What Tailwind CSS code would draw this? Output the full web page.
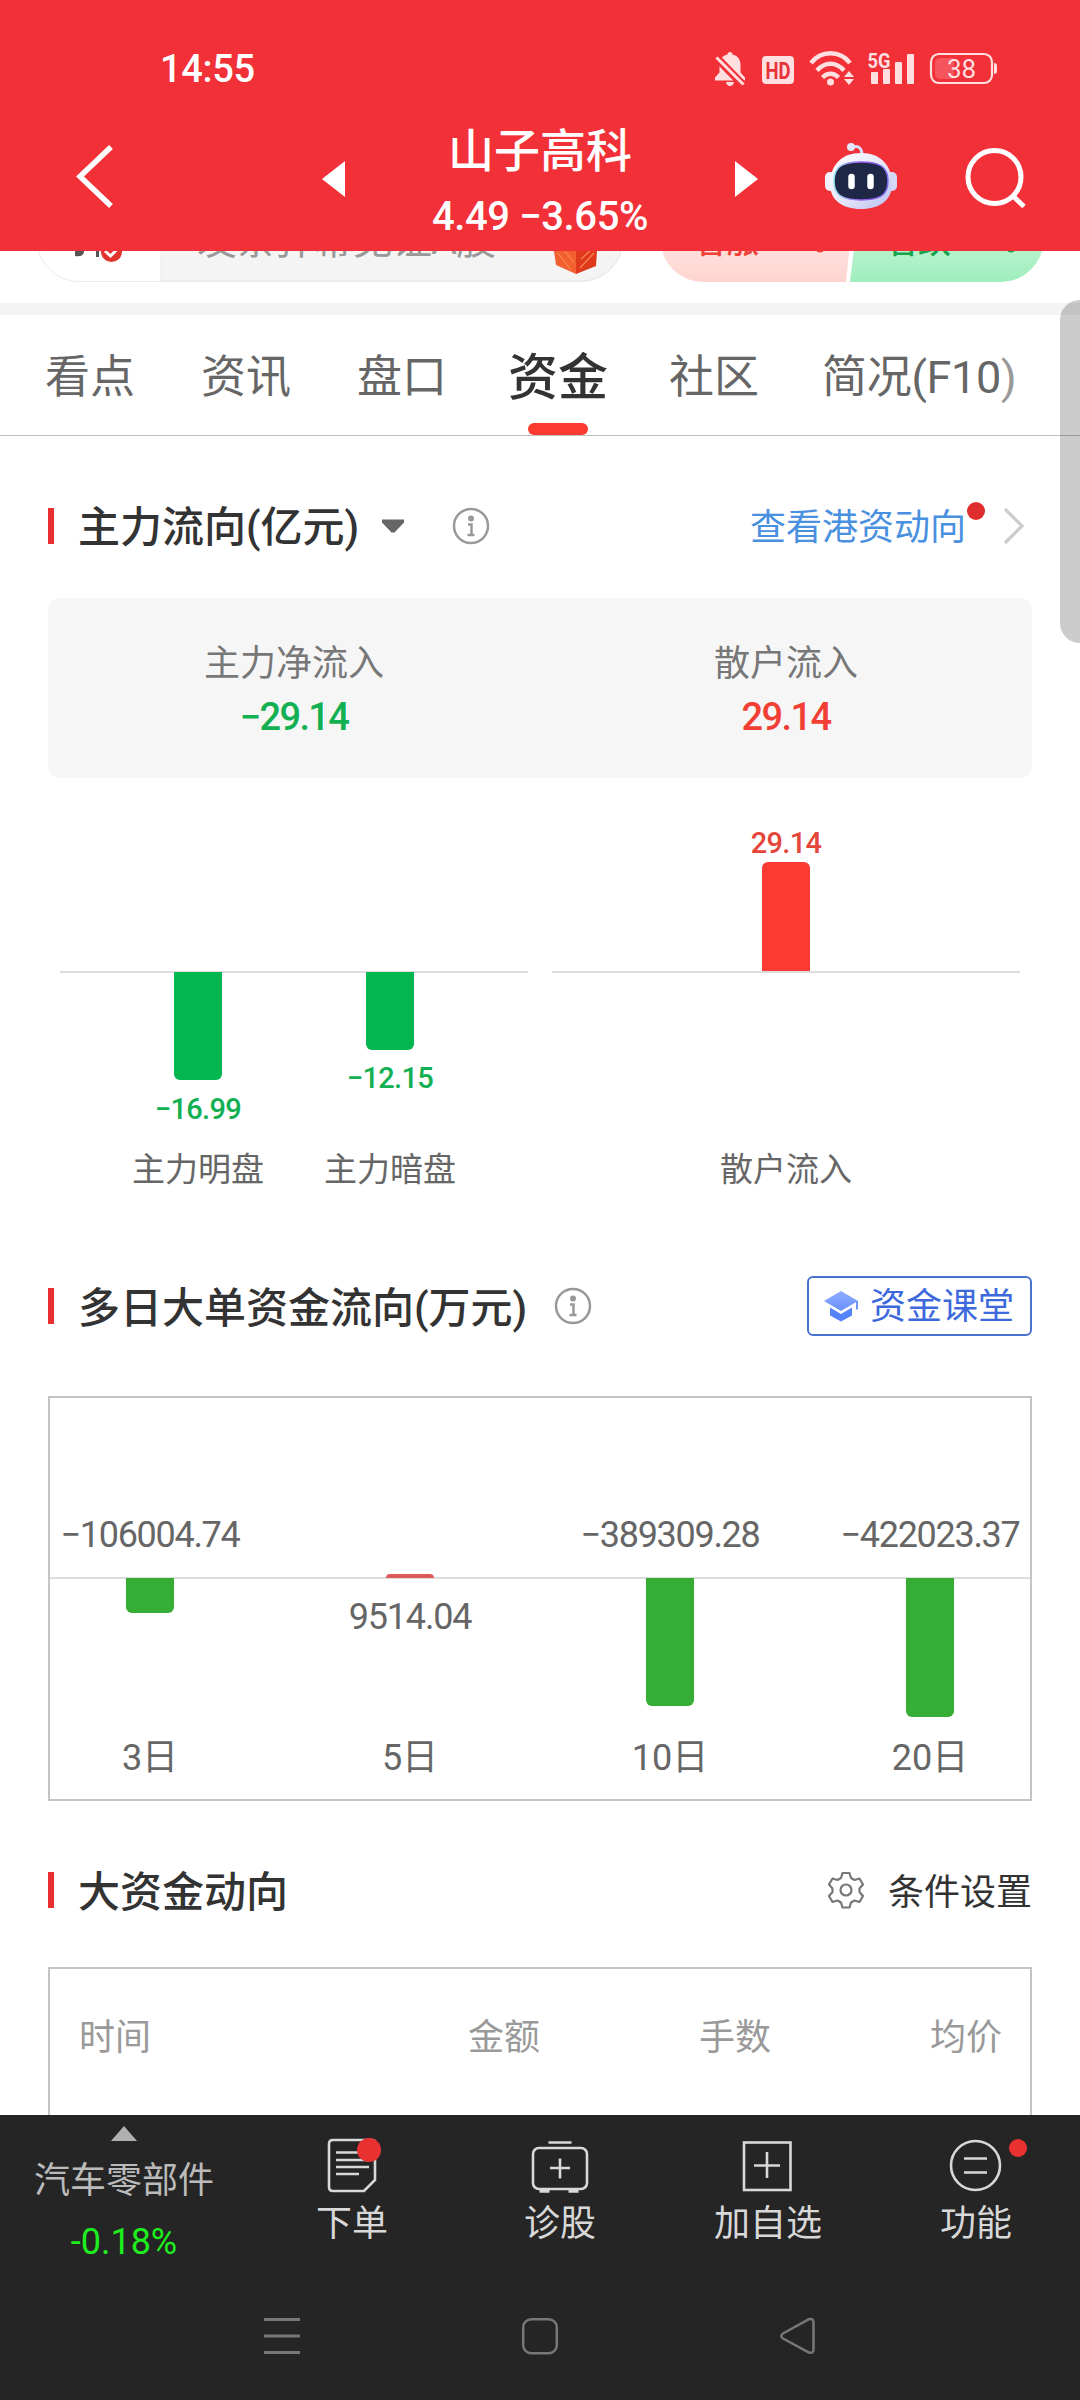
<!DOCTYPE html>
<html lang="zh-CN">
<head>
<meta charset="utf-8">
<title>山子高科 资金</title>
<script src="https://cdn.jsdelivr.net/npm/@tailwindcss/browser@4"></script>
</head>
<body class="w-[1080px] h-[2400px] overflow-hidden bg-white font-[Roboto,'Noto_Sans_CJK_SC',sans-serif] text-[#333]">
<div class="relative flex h-[2400px] flex-col overflow-hidden">

  <!-- header -->
  <header class="h-[251px] shrink-0 bg-[#f23038] text-white">
    <div class="flex h-[138px] items-center justify-between pr-[82px] pl-[160px]">
      <span class="text-[38px] leading-none font-medium tracking-[-0.300px]">14:55</span>
      <svg class="h-[40px] w-[284px]" viewBox="714 49 284 40" fill="#ffdfe0">
        <path d="M730 52c1.500 0 2.500 1 2.500 2.500 5 1 8 5 8 10v8l4.500 5v3H715v-3l4.500-5v-8c0-5 3-9 8-10 0-1.500 1-2.500 2.500-2.500zM726 82h8c-.5 2.500-2 4-4 4s-3.500-1.500-4-4z"/>
        <path d="M714 55l30 31" stroke="#f23038" stroke-width="8"/><path d="M716.500 57.500l27 27" stroke="#ffdfe0" stroke-width="3"/>
        <rect x="762" y="56" width="32" height="28" rx="4"/>
        <text x="778" y="78.500" text-anchor="middle" font-size="23" font-weight="700" fill="#e8323a" textLength="25" lengthAdjust="spacingAndGlyphs">HD</text>
        <g fill="none" stroke="#ffdfe0" stroke-width="4.500"><path d="M811 63c10-13 29-13 39 0"/><path d="M817 70.500c8-9 19-9 27 0"/><path d="M822.500 77.500c5-5 11-5 16 0"/></g>
        <circle cx="830.500" cy="82" r="3.500"/><path d="M849 71l5 6h-10zM849 85l5-6h-10z"/>
        <text x="867.500" y="67.500" font-size="21" font-weight="700" textLength="23" lengthAdjust="spacingAndGlyphs">5G</text>
        <rect x="871" y="72" width="7" height="12" rx="1"/><rect x="883" y="69" width="7" height="15" rx="1"/><rect x="895" y="62" width="7" height="22" rx="1"/><rect x="907" y="54" width="7" height="30" rx="1"/>
        <rect x="931" y="54" width="61" height="29" rx="8" fill="none" stroke="#ffdfe0" stroke-width="2.200"/>
        <path d="M940 58h14v21h-14a5 5 0 0 1-5-5v-11a5 5 0 0 1 5-5z" fill="#f5555c"/>
        <path d="M994 63c2 0 3 1 3 3v5c0 2-1 3-3 3z"/>
        <text x="961.500" y="78" text-anchor="middle" font-size="26">38</text>
      </svg>
    </div>
    <div class="relative flex h-[113px] justify-center">
      <svg class="absolute inset-0 h-[113px] w-[1080px]" viewBox="0 138 1080 113" fill="none" stroke="#fff">
        <path d="M111 147L80 176.500L111 206" stroke-width="5.500"/>
        <path d="M322 179l23-18v36zM758 179l-23-18v36z" fill="#fff" stroke="none"/>
        <circle cx="994.500" cy="177" r="26.500" stroke-width="5"/><path d="M1013 196l11 10.500" stroke-width="5"/>
        <defs>
          <linearGradient id="hd" x1="0" y1="0" x2="1" y2="1"><stop offset="0" stop-color="#fff"/><stop offset=".5" stop-color="#e8e8fa"/><stop offset="1" stop-color="#b9bff0"/></linearGradient>
          <linearGradient id="rim" x1="0" y1="0" x2="1" y2="0"><stop offset="0" stop-color="#8fe4f0"/><stop offset=".5" stop-color="#9b5cf0"/><stop offset="1" stop-color="#7a6cf0"/></linearGradient>
        </defs>
        <path d="M853 147c6-2 9 2 9 8" stroke="#dcdcf6" stroke-width="3"/><circle cx="851" cy="147" r="4" fill="#e6e8fb" stroke="none"/>
        <rect x="825" y="172" width="14" height="19" rx="5" fill="#f1f1fd" stroke="none"/><rect x="883" y="172" width="14" height="19" rx="5" fill="#d5d8f6" stroke="none"/>
        <path d="M861 153c20 0 31 13 31 31 0 16-12 25-31 25s-31-9-31-25c0-18 11-31 31-31z" fill="url(#hd)" stroke="none"/>
        <path d="M861 162c19 0 27 5 27 19s-8 19-27 19-27-5-27-19 8-19 27-19z" fill="#1f2747" stroke="url(#rim)" stroke-width="1.500"/>
        <path d="M851.500 177v9M870.500 177v9" stroke-width="6.500" stroke-linecap="round"/>
      </svg>
      <div class="flex flex-col items-center">
        <div class="mt-[-10px] text-[46px] leading-[46px] font-medium">山子高科</div>
        <div class="mt-[20px] text-[40px] leading-[46px] font-medium tracking-[-0.400px]">4.49 −3.65%</div>
      </div>
    </div>
  </header>

  <!-- comment strip, scrolled under the header -->
  <div class="relative h-[52px] shrink-0 overflow-hidden bg-white">
    <svg class="absolute inset-0 h-[52px] w-[1080px]" viewBox="0 251 1080 52">
      <defs>
        <linearGradient id="up" x1="0" y1="0" x2="0" y2="1"><stop offset=".6" stop-color="#ffe0dc"/><stop offset="1" stop-color="#fed5d0"/></linearGradient>
        <linearGradient id="dn" x1="0" y1="0" x2="0" y2="1"><stop offset=".6" stop-color="#b9f3ce"/><stop offset="1" stop-color="#9eedbc"/></linearGradient>
      </defs>
      <rect x="37" y="197" width="586" height="84.500" rx="42" fill="#fff" stroke="#ebebeb"/>
      <path d="M161 197h420a42 42 0 0 1 0 84H161z" fill="#f4f4f4" stroke="#e8e8e8"/>
      <path d="M75 251h9c0 4-3 6-9 5zM96 251h3v6h-3z" fill="#555"/>
      <circle cx="111.500" cy="251.500" r="10.500" fill="#e0342c"/><path d="M105 251l5.500 5 6-6" fill="none" stroke="#fff" stroke-width="3"/>
      <path d="M576 251h21l-1 15-20 8z" fill="#e03a1c"/><path d="M554 251h22v23l-20-9z" fill="#f2602f"/><path d="M557 252l14 18M565 251l9 12M580 268l14-15M581 259l9-8" stroke="#f98650" stroke-width="1.200"/>
      <path d="M703 197h152l-9 85H703a42 42 0 0 1 0-85z" fill="url(#up)"/>
      <path d="M860 197h141a42 42 0 0 1 0 85H850z" fill="url(#dn)"/>
      <circle cx="820" cy="248" r="4.500" fill="#ee4238"/><circle cx="1011" cy="248" r="4.500" fill="#17a44c"/>
    </svg>
    <div class="absolute left-[197px] top-[-34px] text-[40px] leading-[48px] tracking-[-1px] text-[#999]">发条弹幕见证A股</div>
    <div class="absolute left-[693px] top-[-29px] text-[33px] leading-[40px] font-medium text-[#ee4238]">看涨</div>
    <div class="absolute left-[885px] top-[-29px] text-[33px] leading-[40px] font-medium text-[#17a44c]">看跌</div>
  </div>
  <div class="h-[12px] shrink-0 bg-[#f4f4f4]"></div>

  <!-- tabs -->
  <nav class="flex h-[121px] shrink-0 items-center border-b border-[#bfbfbf] pl-[45px] text-[45px] leading-[60px] text-[#666]">
    <span class="w-[156px] pt-[6px]">看点</span><span class="w-[156px] pt-[6px]">资讯</span><span class="w-[151px] pt-[6px]">盘口</span>
    <span class="relative flex h-full w-[161px] items-center pt-[6px] text-[50px] font-medium text-[#333]">资金<i class="absolute bottom-0 left-[20px] h-[12px] w-[60px] rounded-full bg-[#fb3a30]"></i></span>
    <span class="w-[153px] pt-[6px]">社区</span><span class="pt-[6px] tracking-[-0.300px]">简况(F10<span class="text-[#999]">)</span></span>
  </nav>

  <main class="flex min-h-0 grow flex-col px-[48px]">
    <!-- main capital flow -->
    <div class="mt-[64px] flex h-[52px] shrink-0 items-center">
      <i class="h-[36px] w-[6px] bg-[#e93030]"></i>
      <h2 class="ml-[24px] pt-[3px] text-[42px] leading-[50px] font-medium">主力流向(亿元)</h2>
      <svg class="ml-[22px] h-[14px] w-[24px]" viewBox="0 0 24 14"><path d="M1 .5h22v3L13.500 13.500h-3L1 3.500z" fill="#666"/></svg>
      <svg class="ml-[47px] h-[38px] w-[38px]" viewBox="0 0 38 38" fill="none" stroke="#999" stroke-width="2.500"><circle cx="19" cy="19" r="17"/><circle cx="19" cy="11.500" r="3" fill="#999" stroke="none"/><path d="M16 17.500h3.500V28M15.500 28h7"/></svg>
      <span class="relative ml-auto pt-[3px] text-[36px] leading-[44px] text-[#4a90e0]">查看港资动向<i class="absolute right-[-19px] top-[-1px] h-[18px] w-[18px] rounded-full bg-[#e02e2e]"></i></span>
      <svg class="ml-[37px] mr-[7px] h-[38px] w-[22px]" viewBox="0 0 22 38" fill="none" stroke="#ccc" stroke-width="3.200"><path d="M2 2l17 17L2 36"/></svg>
    </div>
    <div class="mt-[46px] grid h-[180px] shrink-0 grid-cols-2 rounded-[12px] bg-[#f6f6f6] pt-[44px] text-center">
      <div><div class="text-[36px] leading-[44px] text-[#777]">主力净流入</div><div class="mt-[8px] text-[38px] leading-[46px] font-medium tracking-[-1.600px] text-[#12b052]">−29.14</div></div>
      <div><div class="text-[36px] leading-[44px] text-[#777]">散户流入</div><div class="mt-[8px] text-[38px] leading-[46px] font-medium tracking-[-1.600px] text-[#f23f36]">29.14</div></div>
    </div>
    <div class="mt-[30px] flex h-[400px] shrink-0 justify-between px-[12px] text-center text-[29px] leading-[34px] font-medium">
      <div class="w-[468px]">
        <div class="h-[165px] border-b-2 border-[#ddd]"></div>
        <div class="mt-[-1px] flex h-[180px] justify-center gap-[62px] text-[#12b052]">
          <div class="flex w-[130px] flex-col items-center"><div class="w-[48px] shrink-0 rounded-b-[6px] bg-[#04b650]" style="height:108px"></div><span class="mt-[12px] tracking-[-0.700px]">−16.99</span></div>
          <div class="flex w-[130px] flex-col items-center"><div class="w-[48px] shrink-0 rounded-b-[6px] bg-[#04b650]" style="height:78px"></div><span class="mt-[11px] tracking-[-0.700px]">−12.15</span></div>
        </div>
        <div class="mt-[-4px] flex justify-center gap-[60px] text-[33px] leading-[44px] font-normal text-[#666]"><span class="w-[132px]">主力明盘</span><span class="w-[132px]">主力暗盘</span></div>
      </div>
      <div class="w-[468px]">
        <div class="flex h-[165px] flex-col items-center justify-end border-b-2 border-[#ddd] text-[#e5463c]"><span class="mb-[2px] tracking-[-0.700px]">29.14</span><div class="w-[48px] shrink-0 rounded-t-[6px] bg-[#fb3b32]" style="height:109px"></div></div>
        <div class="mt-[175px] text-[33px] leading-[44px] font-normal text-[#666]">散户流入</div>
      </div>
    </div>

    <!-- multi-day large orders -->
    <div class="mt-[68px] flex h-[60px] shrink-0 items-center">
      <i class="h-[36px] w-[6px] bg-[#e93030]"></i>
      <h2 class="ml-[24px] pt-[5px] text-[42px] leading-[50px] font-medium">多日大单资金流向(万元)</h2>
      <svg class="ml-[27px] h-[38px] w-[38px]" viewBox="0 0 38 38" fill="none" stroke="#999" stroke-width="2.500"><circle cx="19" cy="19" r="17"/><circle cx="19" cy="11.500" r="3" fill="#999" stroke="none"/><path d="M16 17.500h3.500V28M15.500 28h7"/></svg>
      <div class="ml-auto flex h-[60px] w-[225px] items-center rounded-[6px] border-2 border-[#4a72cf] pl-[15px] text-[36px] leading-none text-[#3e69dc]">
        <svg class="mr-[10px] h-[32px] w-[36px]" viewBox="0 0 36 32"><defs><linearGradient id="cap" x1="0" y1="0" x2="0" y2="1"><stop offset="0" stop-color="#8fabff"/><stop offset="1" stop-color="#6a92fb"/></linearGradient></defs><path d="M17 1l17 10-17 10L0 11z" fill="url(#cap)"/><path d="M6 17.500l11 6.500 11-6.500v8L17 31.500 6 25.500z" fill="#5583f9"/><path d="M33 11v8.500" stroke="#6f95fb" stroke-width="2"/></svg><span class="pt-[2px]">资金课堂</span>
      </div>
    </div>
    <div class="mt-[60px] h-[405px] shrink-0 overflow-hidden border-2 border-[#c4c4c4] text-center text-[36px] leading-[44px] text-[#666]">
      <div class="mx-[-30px] grid h-full grid-cols-4">
        <div class="flex flex-col items-center"><div class="h-[181px] w-full shrink-0 border-b-2 border-[#ddd] pt-[115px] tracking-[-1.300px]">−106004.74</div><div class="mt-[-1px] h-[156px]"><div class="w-[48px] rounded-b-[6px] bg-[#36ad35]" style="height:35px"></div></div><span class="leading-[48px]">3日</span></div>
        <div class="flex flex-col items-center"><div class="flex h-[181px] w-full shrink-0 items-end justify-center border-b-2 border-[#ddd]"><div class="mb-[-1px] w-[48px] rounded-t-[4px] bg-[#dd5a5a]" style="height:4px"></div></div><div class="mt-[-1px] h-[156px] pt-[17px] tracking-[-1.200px]">9514.04</div><span class="leading-[48px]">5日</span></div>
        <div class="flex flex-col items-center"><div class="h-[181px] w-full shrink-0 border-b-2 border-[#ddd] pt-[115px] tracking-[-1.300px]">−389309.28</div><div class="mt-[-1px] h-[156px]"><div class="w-[48px] rounded-b-[6px] bg-[#36ad35]" style="height:128px"></div></div><span class="leading-[48px]">10日</span></div>
        <div class="flex flex-col items-center"><div class="h-[181px] w-full shrink-0 border-b-2 border-[#ddd] pt-[115px] tracking-[-1.300px]">−422023.37</div><div class="mt-[-1px] h-[156px]"><div class="w-[48px] rounded-b-[6px] bg-[#36ad35]" style="height:139px"></div></div><span class="leading-[48px]">20日</span></div>
      </div>
    </div>

    <!-- large capital moves -->
    <div class="mt-[64px] flex h-[50px] shrink-0 items-center">
      <i class="h-[36px] w-[6px] bg-[#e93030]"></i>
      <h2 class="ml-[24px] pt-[6px] text-[42px] leading-[50px] font-medium">大资金动向</h2>
      <svg class="ml-auto h-[38px] w-[38px]" viewBox="0 0 38 38" fill="none" stroke="#777" stroke-width="2.200" stroke-linejoin="round"><path d="M15.500 2h7l1.500 5 3.500 2 5-1.500 3.500 6-3.500 4v3.500l3.500 4-3.500 6-5-1.500-3.500 2-1.500 5h-7l-1.500-5-3.500-2-5 1.500-3.500-6 3.500-4v-3.500l-3.500-4 3.500-6 5 1.500 3.500-2z"/><circle cx="19" cy="19" r="5.500"/></svg>
      <span class="ml-[23px] pt-[6px] text-[36px] leading-[44px]">条件设置</span>
    </div>
    <div class="mt-[52px] flex h-[200px] shrink-0 border-2 border-b-0 border-[#c4c4c4] pt-[47px] pl-[29px] text-right text-[36px] leading-[44px] text-[#999]">
      <span class="w-[231px] text-left">时间</span><span class="w-[230px]">金额</span><span class="w-[231px]">手数</span><span class="w-[231px]">均价</span>
    </div>
  </main>

  <!-- bottom bar -->
  <footer class="absolute inset-x-0 bottom-0 h-[285px] bg-[#252525] text-[36px] leading-[44px] text-[#d8d8d8]">
    <div class="flex h-[201px]">
      <div class="flex w-[248px] flex-col items-center"><svg class="mt-[11px] h-[15px] w-[26px]" viewBox="0 0 26 15"><path d="M13 0l13 15H0z" fill="#b0b0b0"/></svg><span class="mt-[18px] text-[#bbb]">汽车零部件</span><span class="mt-[17px] text-[#1eee1e]">-0.18%</span></div>
      <div class="flex w-[208px] flex-col items-center pt-[21px]">
        <svg class="h-[60px] w-[60px]" viewBox="322 2136 60 60" fill="none" stroke="#d8d8d8" stroke-width="2.600"><path d="M333 2140h39.500q2.500 0 2.500 3v37l-11 11h-31q-4 0-4-4v-43q0-4 4-4z"/><path d="M336 2152.500h30M336 2160h33M336 2167h33M336 2174h23"/><circle cx="369" cy="2150" r="12" fill="#ea3131" stroke="none"/></svg>
        <span class="mt-[6px]">下单</span></div>
      <div class="flex w-[208px] flex-col items-center pt-[21px]">
        <svg class="h-[60px] w-[60px]" viewBox="529.500 2136 60 60" fill="none" stroke="#d8d8d8" stroke-width="2.600"><rect x="532.500" y="2148" width="54" height="41" rx="6"/><path d="M548 2142.500h23M549.500 2168h20M559.500 2158.500v20"/><path d="M539 2191h10M568 2191h10" stroke-width="3.500"/></svg>
        <span class="mt-[6px]">诊股</span></div>
      <div class="flex w-[208px] flex-col items-center pt-[21px]">
        <svg class="h-[60px] w-[60px]" viewBox="738 2136 60 60" fill="none" stroke="#d8d8d8" stroke-width="2.600"><rect x="744" y="2142.500" width="46.500" height="47.500"/><path d="M754 2165.500h26M767 2152v26"/></svg>
        <span class="mt-[6px]">加自选</span></div>
      <div class="flex w-[208px] flex-col items-center pt-[21px]">
        <svg class="h-[60px] w-[60px] overflow-visible" viewBox="946 2136 60 60" fill="none" stroke="#d8d8d8" stroke-width="2.600"><circle cx="975.500" cy="2165.500" r="24.500"/><path d="M964 2158.500h23M964 2172.500h23"/><circle cx="1018" cy="2148" r="9" fill="#ea3131" stroke="none"/></svg>
        <span class="mt-[6px]">功能</span></div>
    </div>
    <div class="flex justify-between px-[262px]">
      <svg class="h-[40px] w-[40px]" viewBox="0 0 40 40" stroke="#777" stroke-width="3"><path d="M2 3.500h36M2 20h36M2 36.500h36"/></svg>
      <svg class="h-[40px] w-[40px]" viewBox="0 0 40 40" fill="none" stroke="#777" stroke-width="2.500"><rect x="3.200" y="3.200" width="33.600" height="34" rx="8"/></svg>
      <svg class="h-[40px] w-[40px]" viewBox="0 0 40 40" fill="none" stroke="#777" stroke-width="2.500"><path d="M31 3.200L5 17.500Q1.500 20 5 22.500L31 36.500Q35.500 38 35.500 33V6.500Q35.500 2 31 3.200z"/></svg>
    </div>
  </footer>
  <div class="absolute right-0 top-[300px] h-[343px] w-[20px] rounded-l-[20px] bg-black/20"></div>
</div>
</body>
</html>
